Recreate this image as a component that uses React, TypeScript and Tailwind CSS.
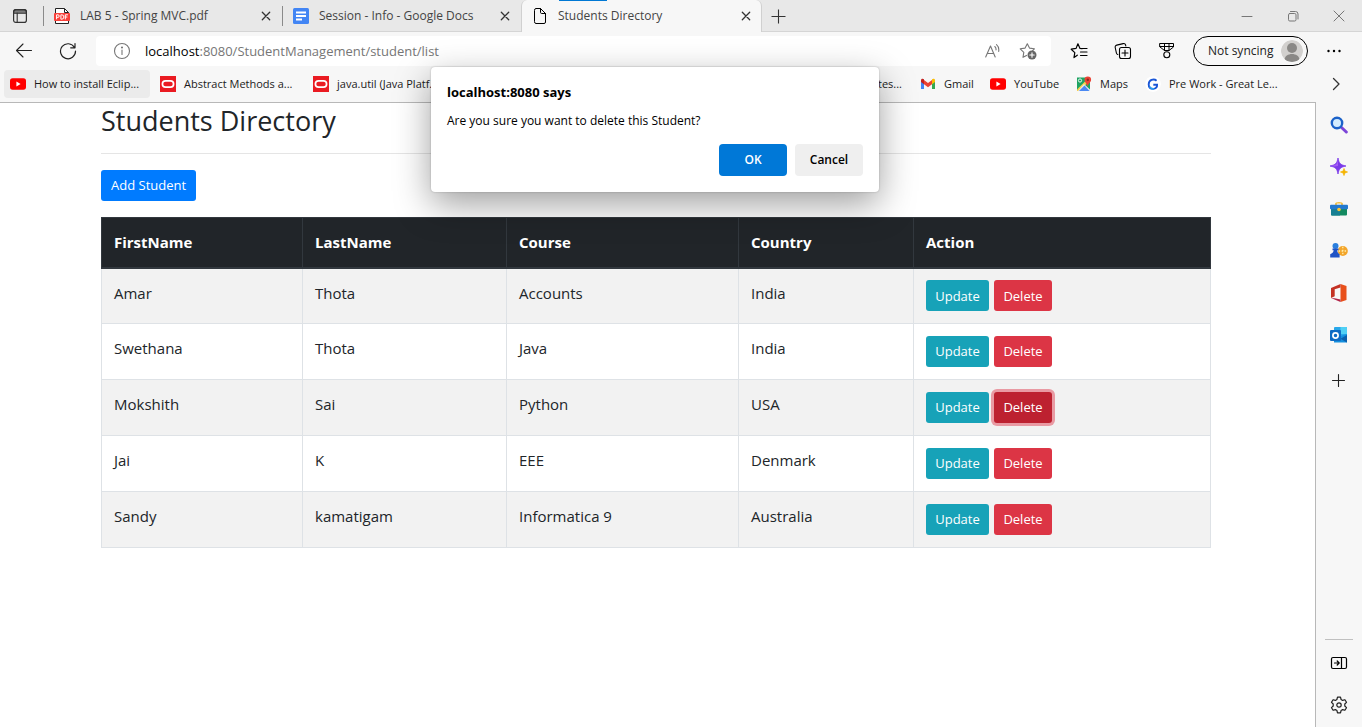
import React, { ReactNode } from "react";

type IconProps = { children: ReactNode; size?: string; box?: string };

function Line({ children, size = "h-4 w-4", box = "0 0 16 16" }: IconProps) {
  return (
    <svg viewBox={box} className={`${size} shrink-0`} fill="none" stroke="currentColor" strokeWidth="1.1" strokeLinecap="round" strokeLinejoin="round" aria-hidden="true">
      {children}
    </svg>
  );
}

const TabActionsIcon = () => (
  <Line>
    <rect x="1.6" y="1.6" width="12.8" height="12.8" rx="2.2" strokeWidth="1.2" />
    <path d="M1.6 5.2V3.8a2.2 2.2 0 0 1 2.2-2.2h8.4a2.2 2.2 0 0 1 2.2 2.2v1.4z" fill="currentColor" fillOpacity=".6" />
    <path d="M5.2 5v9.4" />
  </Line>
);

const PdfIcon = () => (
  <svg viewBox="0 0 16 16" className="h-4 w-4 shrink-0" aria-hidden="true">
    <path d="M1.5.5h9l4 4v11h-13z" fill="#fff" stroke="#222" strokeWidth="1" />
    <path d="M10.5.5v4h4" fill="none" stroke="#222" strokeWidth="1" />
    <rect x="0" y="5" width="16" height="8" rx="1" fill="#f8403a" />
    <path d="M2.6 11.3V6.8h1.3a1.3 1.3 0 0 1 0 2.6H2.6M6.9 6.8v4.4h.8a2.2 2.2 0 0 0 0-4.4zM11.3 11.4V6.8h2.6M11.3 9h2.1" fill="none" stroke="#fff" strokeWidth="1" />
  </svg>
);

const DocsIcon = () => (
  <svg viewBox="0 0 16 16" className="h-4 w-4 shrink-0" aria-hidden="true">
    <rect width="16" height="16" rx="1.5" fill="#4285f4" />
    <path d="M3 4.5h10M3 8h10M3 11.500h6" stroke="#fff" strokeWidth="1.800" />
  </svg>
);

const PageIcon = () => (
  <Line>
    <path d="M2.500 2A1.500 1.500 0 0 1 4 .500h4.500l5 5v8.500a1.500 1.500 0 0 1-1.500 1.500H4a1.500 1.500 0 0 1-1.500-1.500zM8.500.500v3.800a1.200 1.200 0 0 0 1.200 1.200h3.800" strokeWidth="1" />
  </Line>
);

const CloseIcon = () => (
  <Line size="h-2.5 w-2.5" box="0 0 10 10">
    <path d="M1.300 1.300l7.400 7.400M8.700 1.300L1.300 8.700" strokeWidth="1.300" />
  </Line>
);

const YouTubeIcon = () => (
  <svg viewBox="0 0 16 16" className="h-4 w-4 shrink-0" aria-hidden="true">
    <rect x="0" y="2.300" width="16" height="11.400" rx="2.600" fill="#f00" />
    <path d="M6.400 5.600v4.800L10.600 8z" fill="#fff" />
  </svg>
);

const OracleIcon = () => (
  <svg viewBox="0 0 16 16" className="h-4 w-4 shrink-0" aria-hidden="true">
    <rect width="16" height="16" fill="#ea1b22" />
    <rect x="2.400" y="4.800" width="11.200" height="6.400" rx="3.200" fill="none" stroke="#fff" strokeWidth="1.700" />
  </svg>
);

const GmailIcon = () => (
  <svg viewBox="0 0 16 16" className="h-4 w-4 shrink-0" aria-hidden="true">
    <path d="M1 3.500v9.500h3V7z" fill="#4285f4" />
    <path d="M15 3.500v9.500h-3V7z" fill="#34a853" />
    <path d="M4 4v4.200l4 3 4-3V4L8 7z" fill="#ea4335" />
    <path d="M1 4.200C1 2.700 2.700 2.200 4 3.200v5L1 6z" fill="#c5221f" />
    <path d="M15 4.200c0-1.500-1.700-2-3-1v5L15 6z" fill="#fbbc04" />
  </svg>
);

const MapsIcon = () => (
  <svg viewBox="0 0 16 16" className="h-4 w-4 shrink-0" aria-hidden="true">
    <path d="M1 1.500h13v13.500H1z" fill="#1ea362" />
    <path d="M1 13.500L12 2.500h2v2L3.500 15H1z" fill="#fbd04a" />
    <path d="M8 8l6 5.500V15H2z" fill="#e8eaed" />
    <path d="M3 15l5.500-5.500L13.500 15z" fill="#4a89f3" />
    <circle cx="4" cy="4.500" r="1.600" fill="none" stroke="#fff" strokeWidth=".9" />
    <path d="M11.500 10.500C11 7.500 8.500 6.500 8.500 3.800a3.300 3.300 0 0 1 6.600 0c0 2.700-3 3.700-3.600 6.700z" fill="#ea4335" />
    <circle cx="11.800" cy="3.800" r="1.200" fill="#8b2a22" />
  </svg>
);

const GreatLearningIcon = () => (
  <svg viewBox="0 0 16 16" className="h-4 w-4 shrink-0 rounded-full" aria-hidden="true">
    <circle cx="8" cy="8" r="8" fill="#fff" />
    <path d="M11.600 4.700A4.800 4.800 0 0 0 3.700 8.200c0 3 2 4.700 4.500 4.700 2.700 0 4-1.700 3.900-4.200H8.300" fill="none" stroke="#1a56d6" strokeWidth="1.900" />
    <path d="M4.500 10.500c1 2 3 2.500 4.500 2.300" fill="none" stroke="#27a0f0" strokeWidth="1.600" />
  </svg>
);

function Tab({ icon, title, active = false }: { icon: ReactNode; title: string; active?: boolean }) {
  return (
    <div
      className={
        active
          ? "relative -mb-px -ml-px flex h-8 w-[241px] items-center gap-2.5 rounded-t-md border-x border-[#d0d0d0] bg-[#f7f7f7] px-2.5"
          : "flex h-8 w-[239px] items-center gap-2.5 pl-2.5 pr-3"
      }
    >
      {active && <span className="absolute left-[37px] top-0 h-px w-12 bg-[#0078d4]" />}
      {icon}
      <span className="flex-1 truncate text-[12px] text-[#444]">{title}</span>
      <button type="button" aria-label={`Close ${title}`} className="text-[#333]"><CloseIcon /></button>
    </div>
  );
}

function Bookmark({ icon, title, shape = "" }: { icon: ReactNode; title: string; shape?: string }) {
  return (
    <a href="#" className={`flex h-7 shrink-0 items-center gap-2 whitespace-nowrap rounded px-1.5 text-[11px] text-[#1b1b1b] ${shape}`}>
      {icon}
      <span>{title}</span>
    </a>
  );
}

const students = [
  ["Amar", "Thota", "Accounts", "India"],
  ["Swethana", "Thota", "Java", "India"],
  ["Mokshith", "Sai", "Python", "USA"],
  ["Jai", "K", "EEE", "Denmark"],
  ["Sandy", "kamatigam", "Informatica 9", "Australia"],
];
const pendingDelete = "Mokshith";

function TabStrip() {
  return (
    <div className="flex h-8 items-center border-b border-[#d5d5d5] bg-[#e8e8e8]">
      <button type="button" aria-label="Tab actions" className="flex w-[43px] justify-center pr-1 text-[#333]"><TabActionsIcon /></button>
      <span className="h-5 w-px bg-[#8a8a8a]" />
      <Tab icon={<PdfIcon />} title="LAB 5 - Spring MVC.pdf" />
      <span className="-ml-px h-5 w-px bg-[#8a8a8a]" />
      <Tab icon={<DocsIcon />} title="Session - Info - Google Docs" />
      <Tab icon={<PageIcon />} title="Students Directory" active />
      <button type="button" aria-label="New tab" className="ml-2 text-[#333]">
        <Line><path d="M8.500 1.500v14M1.500 8.500h14" strokeLinecap="butt" /></Line>
      </button>
      <div className="ml-auto flex items-center text-[#777]">
        <button type="button" aria-label="Minimize" className="flex w-[46px] justify-center"><Line size="h-3 w-3" box="0 0 12 12"><path d="M1 6.500h10" strokeWidth="1" /></Line></button>
        <button type="button" aria-label="Restore" className="flex w-[46px] justify-center">
          <Line size="h-3 w-3" box="0 0 12 12"><rect x="1.500" y="3.500" width="7.500" height="7.500" rx="1.300" strokeWidth="1" /><path d="M3.500 1.500h5a2.500 2.500 0 0 1 2.500 2.500v5" strokeWidth="1" /></Line>
        </button>
        <button type="button" aria-label="Close window" className="flex w-[46px] justify-center"><Line size="h-3 w-3" box="0 0 12 12"><path d="M1 1l10 10M11 1L1 11" strokeWidth="1" /></Line></button>
      </div>
    </div>
  );
}

function Toolbar() {
  return (
    <div className="flex h-[38px] items-center">
      <button type="button" aria-label="Back" className="flex w-12 justify-center text-[#222]">
        <Line size="h-[18px] w-[18px]" box="0 0 18 18"><path d="M16.500 8.500H1.500M8 2L1.500 8.500 8 15" strokeWidth="1.100" /></Line>
      </button>
      <button type="button" aria-label="Refresh" className="flex w-10 justify-center text-[#222]">
        <Line size="h-[18px] w-[18px]" box="0 0 18 18"><path d="M15.500 5.500A7.500 7.500 0 1 0 16.500 9M16 1.500v4.300h-4.300" strokeWidth="1.200" /></Line>
      </button>
      <div className="ml-2 flex h-[30px] flex-1 items-center rounded bg-white pl-[17px] pr-3.5 text-[#767676]">
        <Line size="h-[18px] w-[18px]" box="0 0 18 18"><circle cx="9" cy="9" r="7.500" /><path d="M9 8v4.500" /><circle cx="9" cy="5.500" r=".5" fill="currentColor" /></Line>
        <span className="ml-3.5 flex-1 pt-px text-[13px]"><span className="text-black">localhost</span>:8080/StudentManagement/student/list</span>
        <button type="button" aria-label="Read aloud">
          <Line><path d="M.7 14L5.500 3l4.700 11M2.300 10.500h6.300M9.800 3.500c1 .8 1.400 2 1.200 3.500M11.500 1.600c2 1.600 2.600 4 2.200 6.800" /></Line>
        </button>
        <button type="button" aria-label="Add to favorites" className="ml-[18px]">
          <Line size="h-[18px] w-[18px]" box="0 0 18 18"><path d="M7.500 13.400L4 15.300l.8-5L1.200 6.800l4.900-.7L8.300 1.700l2.200 4.400 4.900.7-1.800 1.800" /><circle cx="13" cy="13" r="4.500" fill="#666" stroke="none" /><path d="M13 10.800v4.400M10.800 13h4.400" stroke="#fff" /></Line>
        </button>
      </div>
      <div className="flex items-center gap-[26px] pl-[19px] text-black">
        <button type="button" aria-label="Favorites">
          <Line size="h-[18px] w-[18px]" box="0 0 18 18"><path d="M7.300 13.200L4 15.600l.8-5L1.200 7.200l4.900-.8 1.800-4.600L10 6.400l2 .2M12 6.500h5M10.500 10H17M10.500 13.500H17" strokeWidth="1.200" /></Line>
        </button>
        <button type="button" aria-label="Collections">
          <Line size="h-[18px] w-[18px]" box="0 0 18 18"><path d="M3.800 12.500A2 2 0 0 1 2.400 11L1.200 5.500a2 2 0 0 1 1.500-2.400l6.500-1.500a2 2 0 0 1 2.400 1.400l.2 1" strokeWidth="1.100" /><rect x="5.500" y="5.500" width="11" height="11" rx="2" strokeWidth="1.100" /><path d="M11 8v6M8 11h6" strokeWidth="1.100" /></Line>
        </button>
        <button type="button" aria-label="Rewards">
          <Line size="h-[18px] w-[18px]" box="0 0 18 18"><path d="M2 1.500h13.500V5L11 8.500H6.500L2 5zM6.500 1.500v7M11 1.500v7M2 4.500h13.500" strokeWidth="1" /><circle cx="8.800" cy="12.800" r="3" strokeWidth="1.100" /></Line>
        </button>
      </div>
      <button type="button" className="ml-[17px] flex h-[30px] w-[115px] items-center justify-between rounded-full border border-black pl-3.5 pr-1 text-[12px] text-[#222]">
        Not syncing
        <svg viewBox="0 0 22 22" className="h-[22px] w-[22px] rounded-full" aria-hidden="true">
          <circle cx="11" cy="11" r="11" fill="#d2d0ce" />
          <circle cx="11" cy="8" r="5" fill="#8a8886" />
          <path d="M3.500 20c0-8 15-8 15 0-4 2.500-11 2.500-15 0z" fill="#8a8886" />
        </svg>
      </button>
      <button type="button" aria-label="Settings and more" className="ml-[18px] mr-5">
        <svg viewBox="0 0 16 16" className="h-4 w-4" aria-hidden="true"><circle cx="2.500" cy="8" r="1.200" /><circle cx="8" cy="8" r="1.200" /><circle cx="13.500" cy="8" r="1.200" /></svg>
      </button>
    </div>
  );
}

function BookmarksBar() {
  return (
    <div className="flex h-8 items-start justify-between pl-1">
      <div className="flex gap-1">
        <Bookmark icon={<YouTubeIcon />} title="How to install Eclip..." shape="w-[146px] bg-[#ebebeb]" />
        <Bookmark icon={<OracleIcon />} title="Abstract Methods a..." shape="w-[149px]" />
        <Bookmark icon={<OracleIcon />} title="java.util (Java Platf..." shape="w-[149px]" />
      </div>
      <div className="flex items-center gap-1">
        <Bookmark icon={<OracleIcon />} title="Java Updates..." />
        <Bookmark icon={<GmailIcon />} title="Gmail" shape="ml-0.5 w-[66px]" />
        <Bookmark icon={<YouTubeIcon />} title="YouTube" shape="w-[82px]" />
        <Bookmark icon={<MapsIcon />} title="Maps" shape="w-[65px]" />
        <Bookmark icon={<GreatLearningIcon />} title="Pre Work - Great Le..." shape="w-[149px]" />
        <button type="button" aria-label="More favorites" className="ml-9 mr-[18px] text-[#333]"><Line><path d="M5.500 2.500L11 8l-5.500 5.500" strokeWidth="1.300" /></Line></button>
      </div>
    </div>
  );
}

const apps: { name: string; art: ReactNode }[] = [
  { name: "Search", art: <><path d="M11 11l5.300 5" stroke="#7c45d8" strokeWidth="3" strokeLinecap="round" /><circle cx="7" cy="7" r="5.200" fill="#d3ecff" stroke="#1b62c9" strokeWidth="2.400" /></> },
  { name: "Discover", art: <><path d="M8 0c1 5.300 2.300 6.800 8 8-5.700 1.200-7 2.700-8 8-1-5.300-2.300-6.800-8-8 5.700-1.200 7-2.700 8-8z" fill="#7b3be8" stroke="#7b3be8" strokeWidth=".8" /><path d="M8 2c-1 4-2 5-7 6 2 .7 5 .5 7 0z" fill="#a45cf5" /><path d="M14 10.500c.5 2.500 1 3 3.500 3.500-2.500.5-3 1-3.500 3.500-.5-2.500-1-3-3.500-3.500 2.500-.5 3-1 3.500-3.500z" fill="#f5b400" stroke="#f5b400" strokeWidth=".8" /></> },
  { name: "Tools", art: <><path d="M6 5V3.500C6 2.500 12 2.500 12 3.500V5" fill="none" stroke="#f1bb3a" strokeWidth="1.700" /><rect x="1" y="8" width="16" height="7.500" rx="1" fill="#138a60" /><path d="M1 8h9v7.500H2a1 1 0 0 1-1-1z" fill="#177f93" /><rect x="0" y="4.800" width="18" height="4.500" rx="1" fill="#2379ce" /><circle cx="9" cy="9.500" r="1.800" fill="#fbc534" /></> },
  { name: "Games", art: <><circle cx="12.800" cy="9" r="5" fill="#f3a52b" /><path d="M12.800 4.800v8.400M8.600 9H17" stroke="#fff0b0" strokeWidth="1.300" strokeDasharray="1.500 1.500" /><circle cx="5.500" cy="4" r="3" fill="#2b7fdd" /><path d="M2.500 6.500h6v1.700H7.200c.2 2.300 1 3 2.400 4v3.300H.2v-3.300c2-1 3.300-2 3.500-4H2.500z" fill="#2053c5" /></> },
  { name: "Office", art: <><path d="M10.500.0L16.500 2v14l-6 2z" fill="#e8501b" /><path d="M10.500 0L1 4v10l3.700-1.800V5.200l5.800-1.700z" fill="#c43224" /><path d="M1 14l9.500 4v-2.500l-5.800-1.300z" fill="#b3264a" /></> },
  { name: "Outlook", art: <><rect x="4" y="1" width="13" height="14" rx="1" fill="#28a8ea" /><path d="M10.500 1H16a1 1 0 0 1 1 1v6h-6.500z" fill="#50d0f5" /><path d="M17 8v8.500H4V12z" fill="#1490df" /><path d="M17 9v7.500l-6.500-3.800z" fill="#0a5fad" /><rect x="0" y="4" width="11" height="11" rx="1" fill="#0f6cc4" /><circle cx="5.500" cy="9.500" r="2.600" fill="none" stroke="#fff" strokeWidth="1.700" /></> },
];

function Sidebar() {
  return (
    <aside className="flex w-[46px] shrink-0 flex-col items-center pt-[14px] text-[#222]">
      <div className="flex flex-col gap-6">
        {apps.map((a) => (
          <button key={a.name} type="button" aria-label={a.name}>
            <svg viewBox="0 0 18 18" className="block h-[18px] w-[18px]" aria-hidden="true">{a.art}</svg>
          </button>
        ))}
      </div>
      <button type="button" aria-label="Customize" className="mt-7"><Line><path d="M7.500 2.500v12M1.500 8.500h12" /></Line></button>
      <div className="mt-auto flex flex-col items-center pb-[13px]">
        <span className="mb-3.5 h-px w-7 bg-[#c0c0c0]" />
        <button type="button" aria-label="Hide sidebar" className="mb-6 text-black">
          <Line size="h-[18px] w-[18px]" box="0 0 18 18"><rect x="1.500" y="3.500" width="15" height="11" rx="1.500" strokeWidth="1.200" /><path d="M11.500 3.500v11" strokeWidth="1.200" /><path d="M4.500 9h4.500M7.200 7l2 2-2 2" strokeWidth="1.200" /></Line>
        </button>
        <button type="button" aria-label="Settings">
          <Line size="h-[18px] w-[18px]" box="0 0 18 18"><path d="M7.500 1.200h3l.6 2.300 1.500.9 2.300-.7 1.600 2.600-1.700 1.700v2l1.700 1.700-1.600 2.600-2.300-.7-1.500.9-.6 2.300h-3l-.6-2.300-1.500-.9-2.300.7-1.600-2.600L3.200 10V8L1.500 6.300l1.600-2.600 2.300.7 1.500-.9z" strokeWidth="1.200" /><circle cx="9" cy="9" r="2.200" strokeWidth="1.200" /></Line>
        </button>
      </div>
    </aside>
  );
}

function StudentsPage() {
  return (
    <main className="flex-1 border-r border-t border-[#b8b8b8] bg-white pr-[3px] text-[#212529]">
      <div className="mx-auto max-w-[1110px]">
        <h1 className="pt-px text-[27px] font-medium leading-[34px]">Students Directory</h1>
        <hr className="mb-4 mt-[15px] border-[#e5e5e5]" />
        <button type="button" className="h-[31px] rounded-[3px] bg-[#007bff] px-2.5 pt-px text-[13px] text-white">Add Student</button>
        <table className="mt-4 w-full table-fixed border-collapse text-left text-[15px]">
          <colgroup>
            <col className="w-[201px]" />
            <col className="w-[204px]" />
            <col className="w-[232px]" />
            <col className="w-[175px]" />
            <col />
          </colgroup>
          <thead className="bg-[#212529] text-white">
            <tr className="h-[50px]">
              {["FirstName", "LastName", "Course", "Country", "Action"].map((h) => (
                <th key={h} scope="col" className="border border-b-2 border-[#32383e] px-3 font-bold">{h}</th>
              ))}
            </tr>
          </thead>
          <tbody>
            {students.map((row) => (
              <tr key={row[0]} className="h-14 odd:bg-[#f2f2f2]">
                {row.map((cell, i) => (
                  <td key={i} className="border border-[#dee2e6] px-3 pb-1.5">{cell}</td>
                ))}
                <td className="border border-[#dee2e6] px-3">
                  <div className="flex gap-[5px] text-[13px] text-white">
                    <button type="button" className="h-[31px] w-[63px] rounded-[3px] bg-[#17a2b8] pt-px">Update</button>
                    <button
                      type="button"
                      className={row[0] === pendingDelete ? "h-[31px] w-[58px] rounded-[3px] bg-[#bd2130] pt-px ring-3 ring-[#e99aa3]" : "h-[31px] w-[58px] rounded-[3px] bg-[#dc3545] pt-px"}
                    >
                      Delete
                    </button>
                  </div>
                </td>
              </tr>
            ))}
          </tbody>
        </table>
      </div>
    </main>
  );
}

function ConfirmDialog() {
  return (
    <div className="absolute inset-x-0 top-[67px] flex justify-center pr-[52px]">
      <div role="dialog" aria-labelledby="dialog-title" className="w-[448px] rounded bg-white p-4 text-[12px] text-black shadow-[0_0_2px_rgba(0,0,0,0.25),0_12px_36px_rgba(0,0,0,0.38)]">
        <h2 id="dialog-title" className="text-[13px] font-bold leading-[18px]">localhost:8080 says</h2>
        <p className="mt-[11px] leading-[18px]">Are you sure you want to delete this Student?</p>
        <div className="mt-3.5 flex justify-end gap-2 font-semibold">
          <button type="button" className="h-8 w-[68px] rounded-sm bg-[#0078d7] text-white">OK</button>
          <button type="button" className="h-8 w-[68px] rounded-sm bg-[#efefef]">Cancel</button>
        </div>
      </div>
    </div>
  );
}

export default function App() {
  return (
    <div className="relative flex min-h-screen flex-col bg-[#f7f7f7] font-['Open_Sans',sans-serif]">
      <header>
        <TabStrip />
        <Toolbar />
        <BookmarksBar />
      </header>
      <div className="flex flex-1">
        <StudentsPage />
        <Sidebar />
      </div>
      <ConfirmDialog />
    </div>
  );
}
